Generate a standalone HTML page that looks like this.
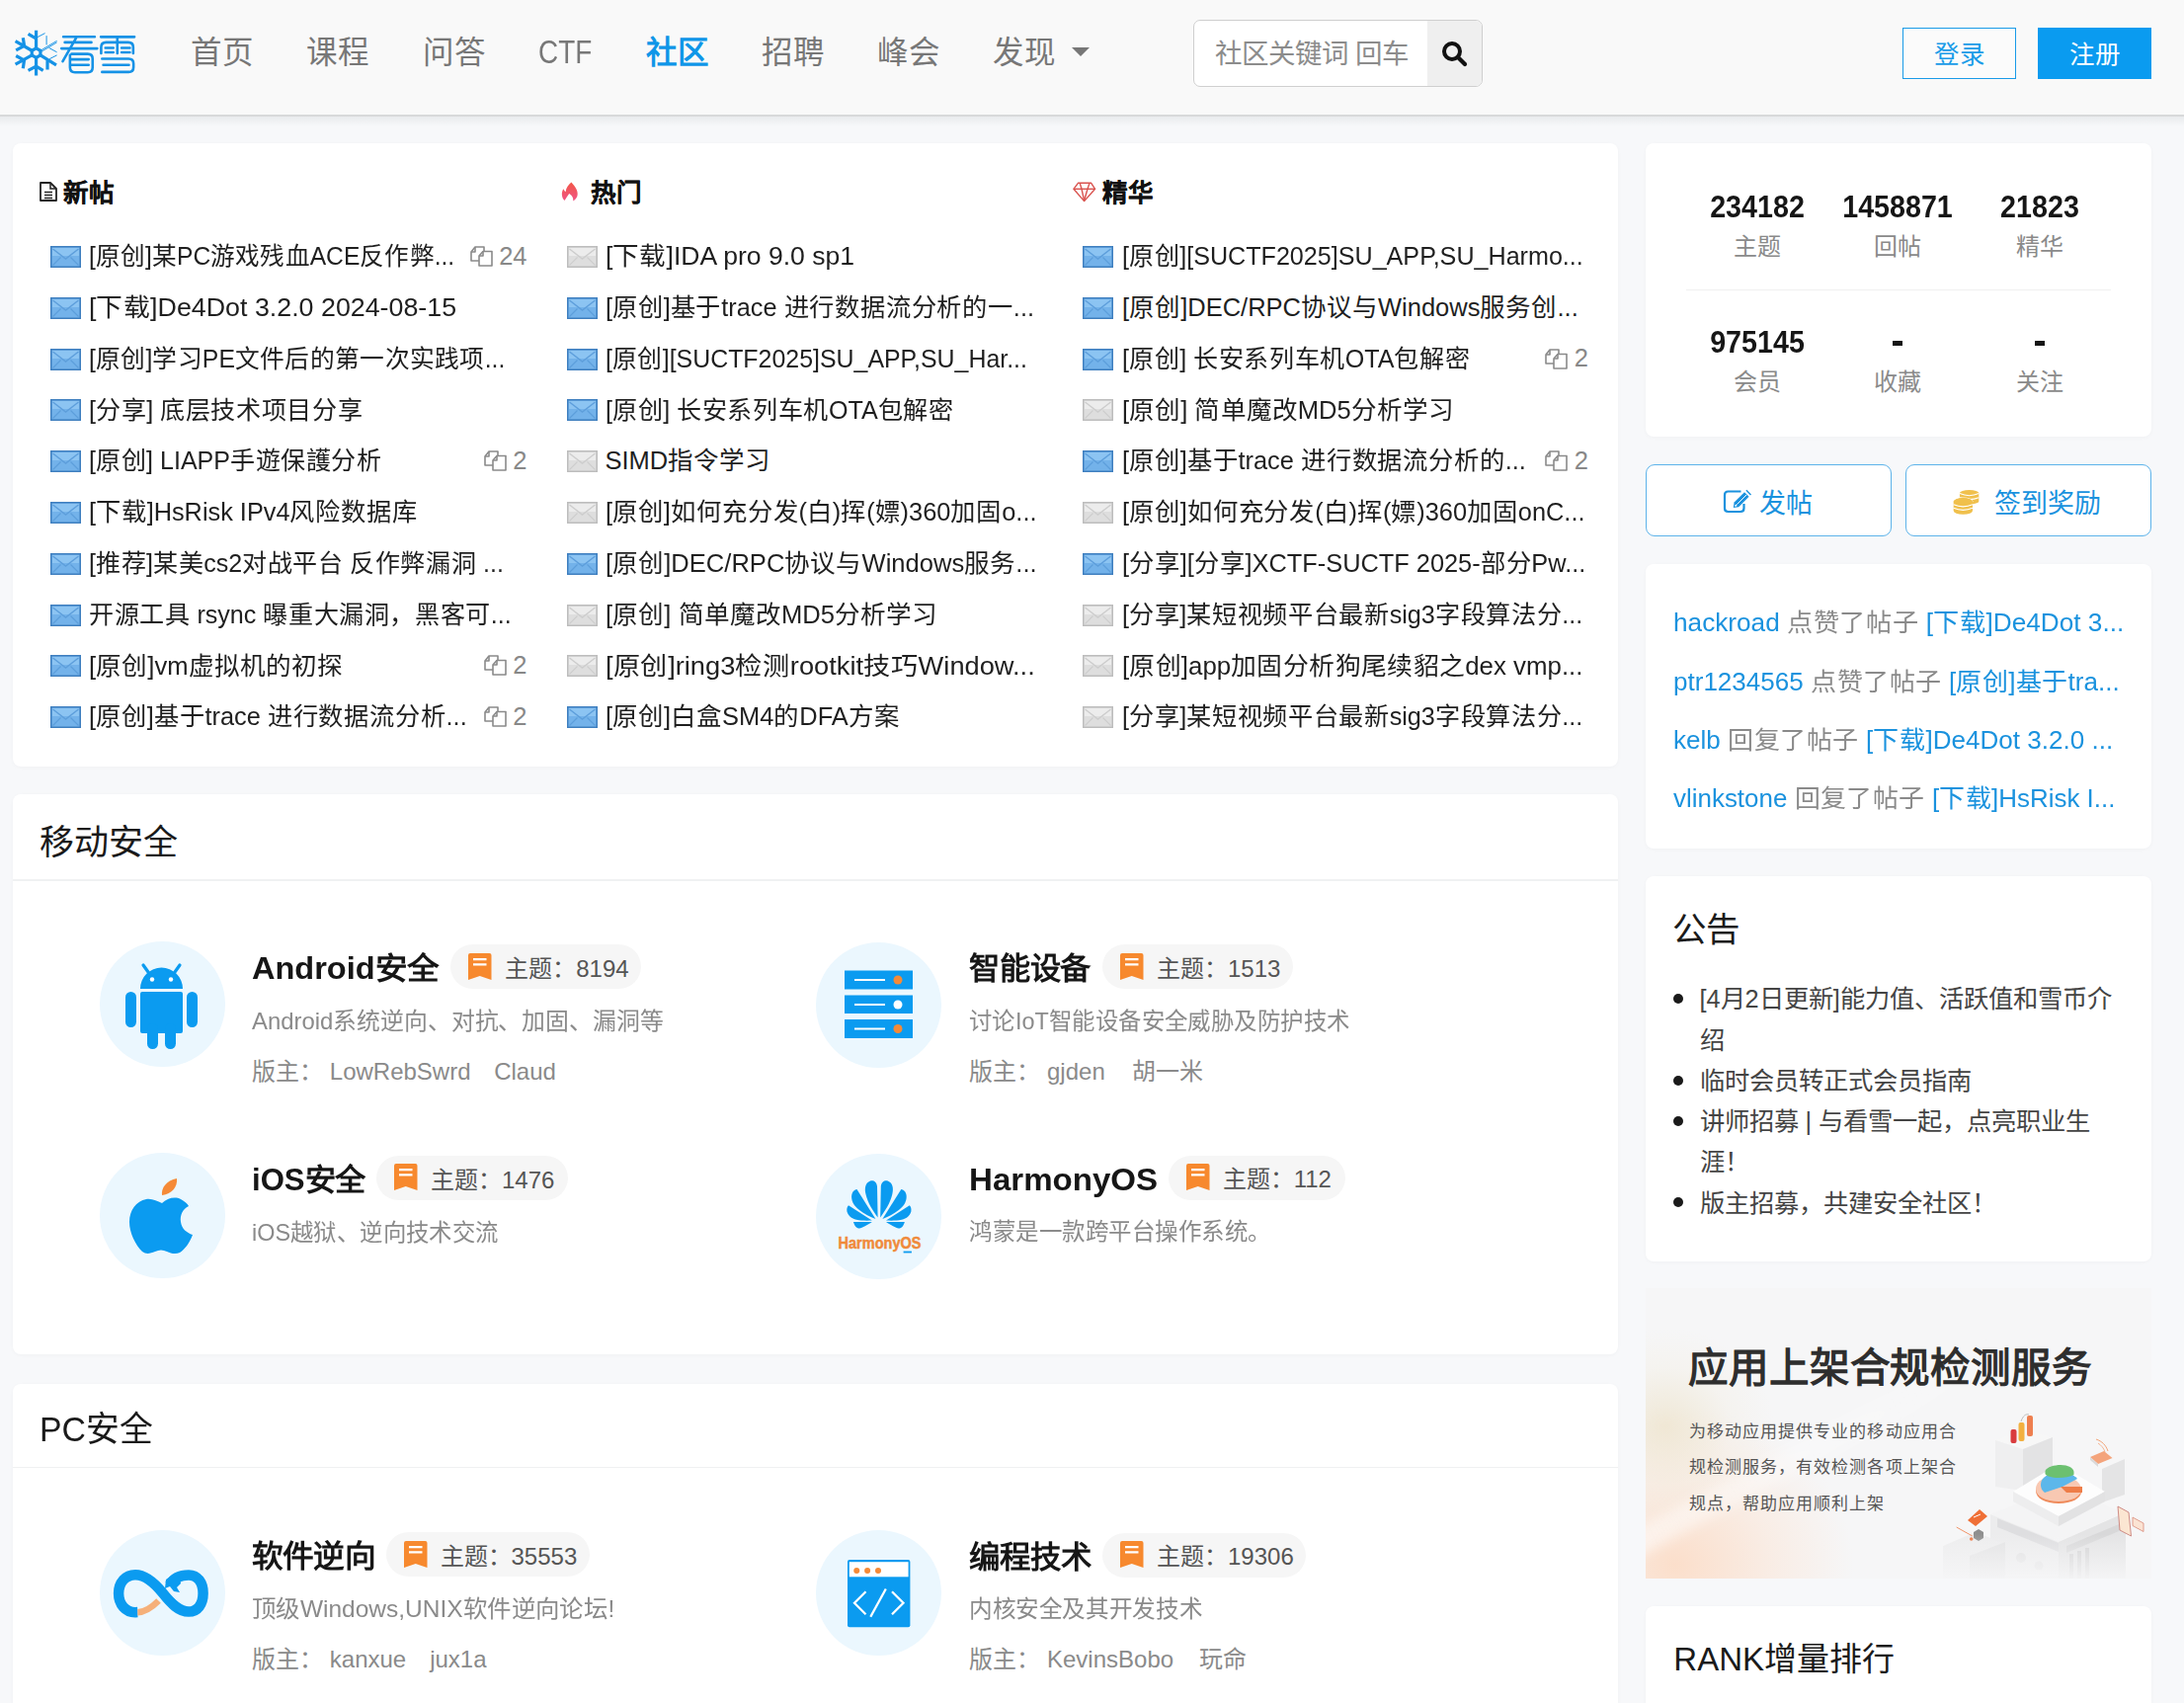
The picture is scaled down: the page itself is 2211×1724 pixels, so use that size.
<!DOCTYPE html>
<html lang="zh-CN"><head><meta charset="utf-8"><title>看雪</title>
<style>
html,body{margin:0;padding:0;}
body{width:2211px;height:1724px;overflow:hidden;position:relative;background:#f7f8fa;font-family:"Liberation Sans",sans-serif;}
.a{position:absolute;white-space:nowrap;}
.card{position:absolute;background:#fff;border-radius:8px;box-shadow:0 1px 4px rgba(0,0,0,0.03);}
svg{position:absolute;overflow:visible;}
</style></head><body>

<div class="a" style="left:0px;top:0px;width:2211px;height:116px;background:#f9f9f9;"></div>
<div class="a" style="left:0px;top:116px;width:2211px;height:2px;background:#d8d9da;"></div>
<div class="a" style="left:0px;top:118px;width:2211px;height:10px;background:linear-gradient(#e9ebed,rgba(245,247,249,0));"></div>
<svg style="left:10px;top:25px" width="135" height="60" viewBox="0 0 2184 971"><g stroke="#1592e6" stroke-linecap="butt" fill="none" stroke-width="52"><polygon points="430,385 500,425 500,500 430,540 360,500 360,425"/><path d="M430 385 V95 M300 150 L425 225 M430 540 V835 M300 750 L430 680 L545 750"/><path d="M360 425 L90 270 M215 215 L235 345 M100 420 L235 345"/><path d="M360 500 L90 650 M100 510 L230 580 M215 715 L235 580"/><path d="M500 500 L760 660 M615 735 L615 590"/></g><g stroke="#1592e6" fill="none" stroke-width="16"><path d="M430 215 L575 140 M650 560 L770 500 M500 425 L770 265 M510 445 L770 290 M600 180 V330 M640 380 L770 450"/></g><g stroke="#1592e6" fill="none" stroke-width="42" stroke-linecap="round" stroke-linejoin="round"><path d="M875 197 H1390 M900 290 H1335 M845 390 H1430 M1085 215 L865 600"/><path d="M985 500 V700 Q985 780 1065 780 H1275 Q1355 780 1355 700 V560 Q1355 480 1275 480 H1010"/><path d="M1005 568 H1290 M1005 660 H1290"/><path d="M1490 200 H2040 M1760 205 V470 M1495 470 V370 Q1495 290 1575 290 H1940 Q2020 290 2020 370 V470"/><path d="M1565 380 H1695 M1565 452 H1695 M1830 380 H1965 M1830 452 H1965"/><path d="M1510 558 H1945 Q2025 558 2025 640 V695 Q2025 775 1945 775 H1510 M1530 660 H1950"/></g></svg>
<div class="a" style="left:193.4px;top:38.1px;font-size:31.5px;line-height:31.5px;color:#777;">首页</div>
<div class="a" style="left:310.4px;top:38.1px;font-size:31.5px;line-height:31.5px;color:#777;">课程</div>
<div class="a" style="left:428.2px;top:38.1px;font-size:31.5px;line-height:31.5px;color:#777;">问答</div>
<div class="a" style="left:544.6px;top:35.3px;font-size:34px;line-height:34px;color:#777;transform-origin:0 0;transform:scaleX(0.82);">CTF</div>
<div class="a" style="left:654.1px;top:38.1px;font-size:31.5px;line-height:31.5px;color:#0f96e8;font-weight:bold;">社区</div>
<div class="a" style="left:770.9px;top:38.1px;font-size:31.5px;line-height:31.5px;color:#777;">招聘</div>
<div class="a" style="left:888.4px;top:38.1px;font-size:31.5px;line-height:31.5px;color:#777;">峰会</div>
<div class="a" style="left:1005.0px;top:38.1px;font-size:31.5px;line-height:31.5px;color:#777;">发现</div>
<svg style="left:1085px;top:48px" width="18" height="10"><polygon points="0,0 18,0 9,9" fill="#777"/></svg>
<div class="a" style="left:1208px;top:20px;width:291px;height:66px;border:1px solid #cfcfcf;border-radius:7px;background:#fff;overflow:hidden;"></div>
<div class="a" style="left:1445px;top:21px;width:55px;height:66px;background:#efefef;border-radius:0 6px 6px 0;"></div>
<div class="a" style="left:1229.5px;top:40.7px;font-size:27.5px;line-height:27.5px;color:#8c8c8c;">社区关键词 回车</div>
<svg style="left:1459px;top:41px" width="27" height="27" viewBox="0 0 27 27">
<circle cx="11" cy="11" r="8" stroke="#111" stroke-width="4" fill="none"/>
<line x1="17" y1="17" x2="24" y2="24" stroke="#111" stroke-width="4.2" stroke-linecap="round"/></svg>
<div class="a" style="left:1926px;top:28px;width:113px;height:49.5px;border:1.2px solid #1a9be8;background:#fbfbfb;"></div>
<div class="a" style="left:1958.0px;top:43.2px;font-size:25.5px;line-height:25.5px;color:#1a9be8;">登录</div>
<div class="a" style="left:2063px;top:28px;width:115px;height:51.5px;background:#0a9bf0;"></div>
<div class="a" style="left:2094.5px;top:43.2px;font-size:25.5px;line-height:25.5px;color:#fff;">注册</div>
<div class="card" style="left:13px;top:145px;width:1625px;height:631px;"></div>
<svg style="left:40px;top:184px" width="18" height="20" viewBox="0 0 18 20"><path d="M1 1 L11 1 L17 7 L17 19 L1 19 Z" stroke="#222" stroke-width="1.8" fill="#fff" stroke-linejoin="round"/><path d="M11 1 L11 7 L17 7" stroke="#222" stroke-width="1.5" fill="none"/><path d="M5 10.5 H13 M5 13.5 H13 M5 16.5 H13" stroke="#222" stroke-width="1.6"/></svg>
<div class="a" style="left:64.1px;top:183.2px;font-size:25.5px;line-height:25.5px;color:#111;font-weight:bold;-webkit-text-stroke:0.2px #111;">新帖</div>
<svg style="left:568px;top:184px" width="18" height="22" viewBox="0 0 18 22"><defs><linearGradient id="flg" x1="0" y1="0" x2="0" y2="1"><stop offset="0" stop-color="#f25646"/><stop offset="1" stop-color="#f05588"/></linearGradient></defs><path d="M10.4 0.6 C13 3.5 16.7 7.5 16.7 12.5 C16.7 15.5 14.8 18 12.2 19.5 C12.8 16.5 11 13.5 8.2 12 C6.8 14 5.2 16.5 3.6 19 C1.8 17.5 0.85 15 0.85 12.5 C0.85 10.5 1.5 8.5 2.4 7.2 C3 8.5 3.8 9.8 4.6 10.2 C5 6 7.5 3 10.4 0.6 Z" fill="url(#flg)"/></svg>
<div class="a" style="left:598.0px;top:183.2px;font-size:25.5px;line-height:25.5px;color:#111;font-weight:bold;-webkit-text-stroke:0.2px #111;">热门</div>
<svg style="left:1086px;top:184px" width="24" height="21" viewBox="0 0 24 21"><g stroke="#d9534f" stroke-width="1.4" fill="none" stroke-linejoin="round"><path d="M5.4 1.3 H18.7 L22.6 7.3 L11.6 19.6 L0.9 7.3 Z"/><path d="M0.9 7.3 H22.6"/><path d="M7.3 1.6 L9 7.3 L11.6 19"/><path d="M16.9 1.6 L15 7.3 L11.6 19"/></g></svg>
<div class="a" style="left:1116.0px;top:183.2px;font-size:25.5px;line-height:25.5px;color:#111;font-weight:bold;-webkit-text-stroke:0.2px #111;">精华</div>
<svg style="left:51px;top:249px" width="31" height="22" viewBox="0 0 31 22"><rect x="0.75" y="0.75" width="29.5" height="20.5" fill="#73b2ea" stroke="#3f7fbf" stroke-width="1.5"/><rect x="2" y="2" width="27" height="8" fill="#8cc4f2"/><path d="M2.5 3 L15.5 13 L28.5 3" stroke="#5d9edb" stroke-width="1.4" fill="none"/><path d="M2.5 19.5 L10.5 11.5 M28.5 19.5 L20.5 11.5" stroke="#5d9edb" stroke-width="1.1" fill="none"/></svg>
<div class="a" style="left:89.8px;top:247.2px;font-size:25.5px;line-height:25.5px;color:#1f1f1f;transform-origin:0 0;transform:scaleX(0.9658);">[原创]某PC游戏残血ACE反作弊...</div>
<div class="a" style="right:1677.5px;top:246.5px;font-size:25.5px;line-height:25.5px;color:#888">24</div>
<svg style="left:476px;top:247px" width="23" height="23" viewBox="0 0 23 23"><g stroke="#8a8a8a" stroke-width="1.6" fill="#fff" stroke-linejoin="round"><path d="M1 8 L5 3 L14 3 L14 17 L1 17 Z"/><path d="M1 8 L5 8 L5 3" fill="none"/><path d="M9 12 L13 7.5 L22 7.5 L22 22 L9 22 Z"/><path d="M9 12 L13 12 L13 7.5" fill="none"/></g></svg>
<svg style="left:51px;top:301px" width="31" height="22" viewBox="0 0 31 22"><rect x="0.75" y="0.75" width="29.5" height="20.5" fill="#73b2ea" stroke="#3f7fbf" stroke-width="1.5"/><rect x="2" y="2" width="27" height="8" fill="#8cc4f2"/><path d="M2.5 3 L15.5 13 L28.5 3" stroke="#5d9edb" stroke-width="1.4" fill="none"/><path d="M2.5 19.5 L10.5 11.5 M28.5 19.5 L20.5 11.5" stroke="#5d9edb" stroke-width="1.1" fill="none"/></svg>
<div class="a" style="left:89.8px;top:299.0px;font-size:25.5px;line-height:25.5px;color:#1f1f1f;transform-origin:0 0;transform:scaleX(1.0513);">[下载]De4Dot 3.2.0 2024-08-15</div>
<svg style="left:51px;top:353px" width="31" height="22" viewBox="0 0 31 22"><rect x="0.75" y="0.75" width="29.5" height="20.5" fill="#73b2ea" stroke="#3f7fbf" stroke-width="1.5"/><rect x="2" y="2" width="27" height="8" fill="#8cc4f2"/><path d="M2.5 3 L15.5 13 L28.5 3" stroke="#5d9edb" stroke-width="1.4" fill="none"/><path d="M2.5 19.5 L10.5 11.5 M28.5 19.5 L20.5 11.5" stroke="#5d9edb" stroke-width="1.1" fill="none"/></svg>
<div class="a" style="left:89.8px;top:350.8px;font-size:25.5px;line-height:25.5px;color:#1f1f1f;transform-origin:0 0;transform:scaleX(0.9721);">[原创]学习PE文件后的第一次实践项...</div>
<svg style="left:51px;top:404px" width="31" height="22" viewBox="0 0 31 22"><rect x="0.75" y="0.75" width="29.5" height="20.5" fill="#73b2ea" stroke="#3f7fbf" stroke-width="1.5"/><rect x="2" y="2" width="27" height="8" fill="#8cc4f2"/><path d="M2.5 3 L15.5 13 L28.5 3" stroke="#5d9edb" stroke-width="1.4" fill="none"/><path d="M2.5 19.5 L10.5 11.5 M28.5 19.5 L20.5 11.5" stroke="#5d9edb" stroke-width="1.1" fill="none"/></svg>
<div class="a" style="left:89.8px;top:402.6px;font-size:25.5px;line-height:25.5px;color:#1f1f1f;transform-origin:0 0;transform:scaleX(0.9856);">[分享] 底层技术项目分享</div>
<svg style="left:51px;top:456px" width="31" height="22" viewBox="0 0 31 22"><rect x="0.75" y="0.75" width="29.5" height="20.5" fill="#73b2ea" stroke="#3f7fbf" stroke-width="1.5"/><rect x="2" y="2" width="27" height="8" fill="#8cc4f2"/><path d="M2.5 3 L15.5 13 L28.5 3" stroke="#5d9edb" stroke-width="1.4" fill="none"/><path d="M2.5 19.5 L10.5 11.5 M28.5 19.5 L20.5 11.5" stroke="#5d9edb" stroke-width="1.1" fill="none"/></svg>
<div class="a" style="left:89.8px;top:454.4px;font-size:25.5px;line-height:25.5px;color:#1f1f1f;transform-origin:0 0;transform:scaleX(0.9826);">[原创] LIAPP手遊保護分析</div>
<div class="a" style="right:1677.5px;top:453.7px;font-size:25.5px;line-height:25.5px;color:#888">2</div>
<svg style="left:490px;top:454px" width="23" height="23" viewBox="0 0 23 23"><g stroke="#8a8a8a" stroke-width="1.6" fill="#fff" stroke-linejoin="round"><path d="M1 8 L5 3 L14 3 L14 17 L1 17 Z"/><path d="M1 8 L5 8 L5 3" fill="none"/><path d="M9 12 L13 7.5 L22 7.5 L22 22 L9 22 Z"/><path d="M9 12 L13 12 L13 7.5" fill="none"/></g></svg>
<svg style="left:51px;top:508px" width="31" height="22" viewBox="0 0 31 22"><rect x="0.75" y="0.75" width="29.5" height="20.5" fill="#73b2ea" stroke="#3f7fbf" stroke-width="1.5"/><rect x="2" y="2" width="27" height="8" fill="#8cc4f2"/><path d="M2.5 3 L15.5 13 L28.5 3" stroke="#5d9edb" stroke-width="1.4" fill="none"/><path d="M2.5 19.5 L10.5 11.5 M28.5 19.5 L20.5 11.5" stroke="#5d9edb" stroke-width="1.1" fill="none"/></svg>
<div class="a" style="left:89.8px;top:506.2px;font-size:25.5px;line-height:25.5px;color:#1f1f1f;transform-origin:0 0;transform:scaleX(0.9925);">[下载]HsRisk IPv4风险数据库</div>
<svg style="left:51px;top:560px" width="31" height="22" viewBox="0 0 31 22"><rect x="0.75" y="0.75" width="29.5" height="20.5" fill="#73b2ea" stroke="#3f7fbf" stroke-width="1.5"/><rect x="2" y="2" width="27" height="8" fill="#8cc4f2"/><path d="M2.5 3 L15.5 13 L28.5 3" stroke="#5d9edb" stroke-width="1.4" fill="none"/><path d="M2.5 19.5 L10.5 11.5 M28.5 19.5 L20.5 11.5" stroke="#5d9edb" stroke-width="1.1" fill="none"/></svg>
<div class="a" style="left:89.8px;top:558.0px;font-size:25.5px;line-height:25.5px;color:#1f1f1f;transform-origin:0 0;transform:scaleX(0.9828);">[推荐]某美cs2对战平台 反作弊漏洞 ...</div>
<svg style="left:51px;top:612px" width="31" height="22" viewBox="0 0 31 22"><rect x="0.75" y="0.75" width="29.5" height="20.5" fill="#73b2ea" stroke="#3f7fbf" stroke-width="1.5"/><rect x="2" y="2" width="27" height="8" fill="#8cc4f2"/><path d="M2.5 3 L15.5 13 L28.5 3" stroke="#5d9edb" stroke-width="1.4" fill="none"/><path d="M2.5 19.5 L10.5 11.5 M28.5 19.5 L20.5 11.5" stroke="#5d9edb" stroke-width="1.1" fill="none"/></svg>
<div class="a" style="left:89.8px;top:609.8px;font-size:25.5px;line-height:25.5px;color:#1f1f1f;transform-origin:0 0;transform:scaleX(0.9847);">开源工具 rsync 曝重大漏洞，黑客可...</div>
<svg style="left:51px;top:663px" width="31" height="22" viewBox="0 0 31 22"><rect x="0.75" y="0.75" width="29.5" height="20.5" fill="#73b2ea" stroke="#3f7fbf" stroke-width="1.5"/><rect x="2" y="2" width="27" height="8" fill="#8cc4f2"/><path d="M2.5 3 L15.5 13 L28.5 3" stroke="#5d9edb" stroke-width="1.4" fill="none"/><path d="M2.5 19.5 L10.5 11.5 M28.5 19.5 L20.5 11.5" stroke="#5d9edb" stroke-width="1.1" fill="none"/></svg>
<div class="a" style="left:89.8px;top:661.6px;font-size:25.5px;line-height:25.5px;color:#1f1f1f;transform-origin:0 0;transform:scaleX(1.0036);">[原创]vm虚拟机的初探</div>
<div class="a" style="right:1677.5px;top:660.9px;font-size:25.5px;line-height:25.5px;color:#888">2</div>
<svg style="left:490px;top:661px" width="23" height="23" viewBox="0 0 23 23"><g stroke="#8a8a8a" stroke-width="1.6" fill="#fff" stroke-linejoin="round"><path d="M1 8 L5 3 L14 3 L14 17 L1 17 Z"/><path d="M1 8 L5 8 L5 3" fill="none"/><path d="M9 12 L13 7.5 L22 7.5 L22 22 L9 22 Z"/><path d="M9 12 L13 12 L13 7.5" fill="none"/></g></svg>
<svg style="left:51px;top:715px" width="31" height="22" viewBox="0 0 31 22"><rect x="0.75" y="0.75" width="29.5" height="20.5" fill="#73b2ea" stroke="#3f7fbf" stroke-width="1.5"/><rect x="2" y="2" width="27" height="8" fill="#8cc4f2"/><path d="M2.5 3 L15.5 13 L28.5 3" stroke="#5d9edb" stroke-width="1.4" fill="none"/><path d="M2.5 19.5 L10.5 11.5 M28.5 19.5 L20.5 11.5" stroke="#5d9edb" stroke-width="1.1" fill="none"/></svg>
<div class="a" style="left:89.8px;top:713.4px;font-size:25.5px;line-height:25.5px;color:#1f1f1f;transform-origin:0 0;transform:scaleX(0.9935);">[原创]基于trace 进行数据流分析...</div>
<div class="a" style="right:1677.5px;top:712.7px;font-size:25.5px;line-height:25.5px;color:#888">2</div>
<svg style="left:490px;top:713px" width="23" height="23" viewBox="0 0 23 23"><g stroke="#8a8a8a" stroke-width="1.6" fill="#fff" stroke-linejoin="round"><path d="M1 8 L5 3 L14 3 L14 17 L1 17 Z"/><path d="M1 8 L5 8 L5 3" fill="none"/><path d="M9 12 L13 7.5 L22 7.5 L22 22 L9 22 Z"/><path d="M9 12 L13 12 L13 7.5" fill="none"/></g></svg>
<svg style="left:574px;top:249px" width="31" height="22" viewBox="0 0 31 22"><rect x="0.75" y="0.75" width="29.5" height="20.5" fill="#dedede" stroke="#bdbdbd" stroke-width="1.5"/><rect x="2" y="2" width="27" height="8" fill="#ececec"/><path d="M2.5 3 L15.5 13 L28.5 3" stroke="#cdcdcd" stroke-width="1.4" fill="none"/><path d="M2.5 19.5 L10.5 11.5 M28.5 19.5 L20.5 11.5" stroke="#cdcdcd" stroke-width="1.1" fill="none"/></svg>
<div class="a" style="left:612.5px;top:247.2px;font-size:25.5px;line-height:25.5px;color:#1f1f1f;transform-origin:0 0;transform:scaleX(1.0418);">[下载]IDA pro 9.0 sp1</div>
<svg style="left:574px;top:301px" width="31" height="22" viewBox="0 0 31 22"><rect x="0.75" y="0.75" width="29.5" height="20.5" fill="#73b2ea" stroke="#3f7fbf" stroke-width="1.5"/><rect x="2" y="2" width="27" height="8" fill="#8cc4f2"/><path d="M2.5 3 L15.5 13 L28.5 3" stroke="#5d9edb" stroke-width="1.4" fill="none"/><path d="M2.5 19.5 L10.5 11.5 M28.5 19.5 L20.5 11.5" stroke="#5d9edb" stroke-width="1.1" fill="none"/></svg>
<div class="a" style="left:612.5px;top:299.0px;font-size:25.5px;line-height:25.5px;color:#1f1f1f;transform-origin:0 0;transform:scaleX(0.9926);">[原创]基于trace 进行数据流分析的一...</div>
<svg style="left:574px;top:353px" width="31" height="22" viewBox="0 0 31 22"><rect x="0.75" y="0.75" width="29.5" height="20.5" fill="#73b2ea" stroke="#3f7fbf" stroke-width="1.5"/><rect x="2" y="2" width="27" height="8" fill="#8cc4f2"/><path d="M2.5 3 L15.5 13 L28.5 3" stroke="#5d9edb" stroke-width="1.4" fill="none"/><path d="M2.5 19.5 L10.5 11.5 M28.5 19.5 L20.5 11.5" stroke="#5d9edb" stroke-width="1.1" fill="none"/></svg>
<div class="a" style="left:612.5px;top:350.8px;font-size:25.5px;line-height:25.5px;color:#1f1f1f;transform-origin:0 0;transform:scaleX(0.9769);">[原创][SUCTF2025]SU_APP,SU_Har...</div>
<svg style="left:574px;top:404px" width="31" height="22" viewBox="0 0 31 22"><rect x="0.75" y="0.75" width="29.5" height="20.5" fill="#73b2ea" stroke="#3f7fbf" stroke-width="1.5"/><rect x="2" y="2" width="27" height="8" fill="#8cc4f2"/><path d="M2.5 3 L15.5 13 L28.5 3" stroke="#5d9edb" stroke-width="1.4" fill="none"/><path d="M2.5 19.5 L10.5 11.5 M28.5 19.5 L20.5 11.5" stroke="#5d9edb" stroke-width="1.1" fill="none"/></svg>
<div class="a" style="left:612.5px;top:402.6px;font-size:25.5px;line-height:25.5px;color:#1f1f1f;transform-origin:0 0;transform:scaleX(0.9859);">[原创] 长安系列车机OTA包解密</div>
<svg style="left:574px;top:456px" width="31" height="22" viewBox="0 0 31 22"><rect x="0.75" y="0.75" width="29.5" height="20.5" fill="#dedede" stroke="#bdbdbd" stroke-width="1.5"/><rect x="2" y="2" width="27" height="8" fill="#ececec"/><path d="M2.5 3 L15.5 13 L28.5 3" stroke="#cdcdcd" stroke-width="1.4" fill="none"/><path d="M2.5 19.5 L10.5 11.5 M28.5 19.5 L20.5 11.5" stroke="#cdcdcd" stroke-width="1.1" fill="none"/></svg>
<div class="a" style="left:612.5px;top:454.4px;font-size:25.5px;line-height:25.5px;color:#1f1f1f;transform-origin:0 0;transform:scaleX(1.0000);">SIMD指令学习</div>
<svg style="left:574px;top:508px" width="31" height="22" viewBox="0 0 31 22"><rect x="0.75" y="0.75" width="29.5" height="20.5" fill="#dedede" stroke="#bdbdbd" stroke-width="1.5"/><rect x="2" y="2" width="27" height="8" fill="#ececec"/><path d="M2.5 3 L15.5 13 L28.5 3" stroke="#cdcdcd" stroke-width="1.4" fill="none"/><path d="M2.5 19.5 L10.5 11.5 M28.5 19.5 L20.5 11.5" stroke="#cdcdcd" stroke-width="1.1" fill="none"/></svg>
<div class="a" style="left:612.5px;top:506.2px;font-size:25.5px;line-height:25.5px;color:#1f1f1f;transform-origin:0 0;transform:scaleX(0.9963);">[原创]如何充分发(白)挥(嫖)360加固o...</div>
<svg style="left:574px;top:560px" width="31" height="22" viewBox="0 0 31 22"><rect x="0.75" y="0.75" width="29.5" height="20.5" fill="#73b2ea" stroke="#3f7fbf" stroke-width="1.5"/><rect x="2" y="2" width="27" height="8" fill="#8cc4f2"/><path d="M2.5 3 L15.5 13 L28.5 3" stroke="#5d9edb" stroke-width="1.4" fill="none"/><path d="M2.5 19.5 L10.5 11.5 M28.5 19.5 L20.5 11.5" stroke="#5d9edb" stroke-width="1.1" fill="none"/></svg>
<div class="a" style="left:612.5px;top:558.0px;font-size:25.5px;line-height:25.5px;color:#1f1f1f;transform-origin:0 0;transform:scaleX(1.0023);">[原创]DEC/RPC协议与Windows服务...</div>
<svg style="left:574px;top:612px" width="31" height="22" viewBox="0 0 31 22"><rect x="0.75" y="0.75" width="29.5" height="20.5" fill="#dedede" stroke="#bdbdbd" stroke-width="1.5"/><rect x="2" y="2" width="27" height="8" fill="#ececec"/><path d="M2.5 3 L15.5 13 L28.5 3" stroke="#cdcdcd" stroke-width="1.4" fill="none"/><path d="M2.5 19.5 L10.5 11.5 M28.5 19.5 L20.5 11.5" stroke="#cdcdcd" stroke-width="1.1" fill="none"/></svg>
<div class="a" style="left:612.5px;top:609.8px;font-size:25.5px;line-height:25.5px;color:#1f1f1f;transform-origin:0 0;transform:scaleX(1.0042);">[原创] 简单魔改MD5分析学习</div>
<svg style="left:574px;top:663px" width="31" height="22" viewBox="0 0 31 22"><rect x="0.75" y="0.75" width="29.5" height="20.5" fill="#dedede" stroke="#bdbdbd" stroke-width="1.5"/><rect x="2" y="2" width="27" height="8" fill="#ececec"/><path d="M2.5 3 L15.5 13 L28.5 3" stroke="#cdcdcd" stroke-width="1.4" fill="none"/><path d="M2.5 19.5 L10.5 11.5 M28.5 19.5 L20.5 11.5" stroke="#cdcdcd" stroke-width="1.1" fill="none"/></svg>
<div class="a" style="left:612.5px;top:661.6px;font-size:25.5px;line-height:25.5px;color:#1f1f1f;transform-origin:0 0;transform:scaleX(1.0685);">[原创]ring3检测rootkit技巧Window...</div>
<svg style="left:574px;top:715px" width="31" height="22" viewBox="0 0 31 22"><rect x="0.75" y="0.75" width="29.5" height="20.5" fill="#73b2ea" stroke="#3f7fbf" stroke-width="1.5"/><rect x="2" y="2" width="27" height="8" fill="#8cc4f2"/><path d="M2.5 3 L15.5 13 L28.5 3" stroke="#5d9edb" stroke-width="1.4" fill="none"/><path d="M2.5 19.5 L10.5 11.5 M28.5 19.5 L20.5 11.5" stroke="#5d9edb" stroke-width="1.1" fill="none"/></svg>
<div class="a" style="left:612.5px;top:713.4px;font-size:25.5px;line-height:25.5px;color:#1f1f1f;transform-origin:0 0;transform:scaleX(0.9983);">[原创]白盒SM4的DFA方案</div>
<svg style="left:1096px;top:249px" width="31" height="22" viewBox="0 0 31 22"><rect x="0.75" y="0.75" width="29.5" height="20.5" fill="#73b2ea" stroke="#3f7fbf" stroke-width="1.5"/><rect x="2" y="2" width="27" height="8" fill="#8cc4f2"/><path d="M2.5 3 L15.5 13 L28.5 3" stroke="#5d9edb" stroke-width="1.4" fill="none"/><path d="M2.5 19.5 L10.5 11.5 M28.5 19.5 L20.5 11.5" stroke="#5d9edb" stroke-width="1.1" fill="none"/></svg>
<div class="a" style="left:1136.1px;top:247.2px;font-size:25.5px;line-height:25.5px;color:#1f1f1f;transform-origin:0 0;transform:scaleX(0.9851);">[原创][SUCTF2025]SU_APP,SU_Harmo...</div>
<svg style="left:1096px;top:301px" width="31" height="22" viewBox="0 0 31 22"><rect x="0.75" y="0.75" width="29.5" height="20.5" fill="#73b2ea" stroke="#3f7fbf" stroke-width="1.5"/><rect x="2" y="2" width="27" height="8" fill="#8cc4f2"/><path d="M2.5 3 L15.5 13 L28.5 3" stroke="#5d9edb" stroke-width="1.4" fill="none"/><path d="M2.5 19.5 L10.5 11.5 M28.5 19.5 L20.5 11.5" stroke="#5d9edb" stroke-width="1.1" fill="none"/></svg>
<div class="a" style="left:1136.1px;top:299.0px;font-size:25.5px;line-height:25.5px;color:#1f1f1f;transform-origin:0 0;transform:scaleX(1.0000);">[原创]DEC/RPC协议与Windows服务创...</div>
<svg style="left:1096px;top:353px" width="31" height="22" viewBox="0 0 31 22"><rect x="0.75" y="0.75" width="29.5" height="20.5" fill="#73b2ea" stroke="#3f7fbf" stroke-width="1.5"/><rect x="2" y="2" width="27" height="8" fill="#8cc4f2"/><path d="M2.5 3 L15.5 13 L28.5 3" stroke="#5d9edb" stroke-width="1.4" fill="none"/><path d="M2.5 19.5 L10.5 11.5 M28.5 19.5 L20.5 11.5" stroke="#5d9edb" stroke-width="1.1" fill="none"/></svg>
<div class="a" style="left:1136.1px;top:350.8px;font-size:25.5px;line-height:25.5px;color:#1f1f1f;transform-origin:0 0;transform:scaleX(0.9845);">[原创] 长安系列车机OTA包解密</div>
<div class="a" style="right:603.0px;top:350.1px;font-size:25.5px;line-height:25.5px;color:#888">2</div>
<svg style="left:1564px;top:351px" width="23" height="23" viewBox="0 0 23 23"><g stroke="#8a8a8a" stroke-width="1.6" fill="#fff" stroke-linejoin="round"><path d="M1 8 L5 3 L14 3 L14 17 L1 17 Z"/><path d="M1 8 L5 8 L5 3" fill="none"/><path d="M9 12 L13 7.5 L22 7.5 L22 22 L9 22 Z"/><path d="M9 12 L13 12 L13 7.5" fill="none"/></g></svg>
<svg style="left:1096px;top:404px" width="31" height="22" viewBox="0 0 31 22"><rect x="0.75" y="0.75" width="29.5" height="20.5" fill="#dedede" stroke="#bdbdbd" stroke-width="1.5"/><rect x="2" y="2" width="27" height="8" fill="#ececec"/><path d="M2.5 3 L15.5 13 L28.5 3" stroke="#cdcdcd" stroke-width="1.4" fill="none"/><path d="M2.5 19.5 L10.5 11.5 M28.5 19.5 L20.5 11.5" stroke="#cdcdcd" stroke-width="1.1" fill="none"/></svg>
<div class="a" style="left:1136.1px;top:402.6px;font-size:25.5px;line-height:25.5px;color:#1f1f1f;transform-origin:0 0;transform:scaleX(1.0030);">[原创] 简单魔改MD5分析学习</div>
<svg style="left:1096px;top:456px" width="31" height="22" viewBox="0 0 31 22"><rect x="0.75" y="0.75" width="29.5" height="20.5" fill="#73b2ea" stroke="#3f7fbf" stroke-width="1.5"/><rect x="2" y="2" width="27" height="8" fill="#8cc4f2"/><path d="M2.5 3 L15.5 13 L28.5 3" stroke="#5d9edb" stroke-width="1.4" fill="none"/><path d="M2.5 19.5 L10.5 11.5 M28.5 19.5 L20.5 11.5" stroke="#5d9edb" stroke-width="1.1" fill="none"/></svg>
<div class="a" style="left:1136.1px;top:454.4px;font-size:25.5px;line-height:25.5px;color:#1f1f1f;transform-origin:0 0;transform:scaleX(0.9941);">[原创]基于trace 进行数据流分析的...</div>
<div class="a" style="right:603.0px;top:453.7px;font-size:25.5px;line-height:25.5px;color:#888">2</div>
<svg style="left:1564px;top:454px" width="23" height="23" viewBox="0 0 23 23"><g stroke="#8a8a8a" stroke-width="1.6" fill="#fff" stroke-linejoin="round"><path d="M1 8 L5 3 L14 3 L14 17 L1 17 Z"/><path d="M1 8 L5 8 L5 3" fill="none"/><path d="M9 12 L13 7.5 L22 7.5 L22 22 L9 22 Z"/><path d="M9 12 L13 12 L13 7.5" fill="none"/></g></svg>
<svg style="left:1096px;top:508px" width="31" height="22" viewBox="0 0 31 22"><rect x="0.75" y="0.75" width="29.5" height="20.5" fill="#dedede" stroke="#bdbdbd" stroke-width="1.5"/><rect x="2" y="2" width="27" height="8" fill="#ececec"/><path d="M2.5 3 L15.5 13 L28.5 3" stroke="#cdcdcd" stroke-width="1.4" fill="none"/><path d="M2.5 19.5 L10.5 11.5 M28.5 19.5 L20.5 11.5" stroke="#cdcdcd" stroke-width="1.1" fill="none"/></svg>
<div class="a" style="left:1136.1px;top:506.2px;font-size:25.5px;line-height:25.5px;color:#1f1f1f;transform-origin:0 0;transform:scaleX(0.9953);">[原创]如何充分发(白)挥(嫖)360加固onC...</div>
<svg style="left:1096px;top:560px" width="31" height="22" viewBox="0 0 31 22"><rect x="0.75" y="0.75" width="29.5" height="20.5" fill="#73b2ea" stroke="#3f7fbf" stroke-width="1.5"/><rect x="2" y="2" width="27" height="8" fill="#8cc4f2"/><path d="M2.5 3 L15.5 13 L28.5 3" stroke="#5d9edb" stroke-width="1.4" fill="none"/><path d="M2.5 19.5 L10.5 11.5 M28.5 19.5 L20.5 11.5" stroke="#5d9edb" stroke-width="1.1" fill="none"/></svg>
<div class="a" style="left:1136.1px;top:558.0px;font-size:25.5px;line-height:25.5px;color:#1f1f1f;transform-origin:0 0;transform:scaleX(0.9944);">[分享][分享]XCTF-SUCTF 2025-部分Pw...</div>
<svg style="left:1096px;top:612px" width="31" height="22" viewBox="0 0 31 22"><rect x="0.75" y="0.75" width="29.5" height="20.5" fill="#dedede" stroke="#bdbdbd" stroke-width="1.5"/><rect x="2" y="2" width="27" height="8" fill="#ececec"/><path d="M2.5 3 L15.5 13 L28.5 3" stroke="#cdcdcd" stroke-width="1.4" fill="none"/><path d="M2.5 19.5 L10.5 11.5 M28.5 19.5 L20.5 11.5" stroke="#cdcdcd" stroke-width="1.1" fill="none"/></svg>
<div class="a" style="left:1136.1px;top:609.8px;font-size:25.5px;line-height:25.5px;color:#1f1f1f;transform-origin:0 0;transform:scaleX(0.9872);">[分享]某短视频平台最新sig3字段算法分...</div>
<svg style="left:1096px;top:663px" width="31" height="22" viewBox="0 0 31 22"><rect x="0.75" y="0.75" width="29.5" height="20.5" fill="#dedede" stroke="#bdbdbd" stroke-width="1.5"/><rect x="2" y="2" width="27" height="8" fill="#ececec"/><path d="M2.5 3 L15.5 13 L28.5 3" stroke="#cdcdcd" stroke-width="1.4" fill="none"/><path d="M2.5 19.5 L10.5 11.5 M28.5 19.5 L20.5 11.5" stroke="#cdcdcd" stroke-width="1.1" fill="none"/></svg>
<div class="a" style="left:1136.1px;top:661.6px;font-size:25.5px;line-height:25.5px;color:#1f1f1f;transform-origin:0 0;transform:scaleX(1.0132);">[原创]app加固分析狗尾续貂之dex vmp...</div>
<svg style="left:1096px;top:715px" width="31" height="22" viewBox="0 0 31 22"><rect x="0.75" y="0.75" width="29.5" height="20.5" fill="#dedede" stroke="#bdbdbd" stroke-width="1.5"/><rect x="2" y="2" width="27" height="8" fill="#ececec"/><path d="M2.5 3 L15.5 13 L28.5 3" stroke="#cdcdcd" stroke-width="1.4" fill="none"/><path d="M2.5 19.5 L10.5 11.5 M28.5 19.5 L20.5 11.5" stroke="#cdcdcd" stroke-width="1.1" fill="none"/></svg>
<div class="a" style="left:1136.1px;top:713.4px;font-size:25.5px;line-height:25.5px;color:#1f1f1f;transform-origin:0 0;transform:scaleX(0.9872);">[分享]某短视频平台最新sig3字段算法分...</div>
<div class="card" style="left:1666px;top:145px;width:512px;height:297px;"></div>
<div class="a" style="left:1678.5px;width:200px;text-align:center;top:193.5px;font-size:31px;line-height:31px;font-weight:bold;color:#161616;transform:scaleX(0.925);">234182</div>
<div class="a" style="left:1678.5px;width:200px;text-align:center;top:238.3px;font-size:24px;line-height:24px;color:#8a8a8a;">主题</div>
<div class="a" style="left:1821px;width:200px;text-align:center;top:193.5px;font-size:31px;line-height:31px;font-weight:bold;color:#161616;transform:scaleX(0.925);">1458871</div>
<div class="a" style="left:1821px;width:200px;text-align:center;top:238.3px;font-size:24px;line-height:24px;color:#8a8a8a;">回帖</div>
<div class="a" style="left:1965px;width:200px;text-align:center;top:193.5px;font-size:31px;line-height:31px;font-weight:bold;color:#161616;transform:scaleX(0.925);">21823</div>
<div class="a" style="left:1965px;width:200px;text-align:center;top:238.3px;font-size:24px;line-height:24px;color:#8a8a8a;">精华</div>
<div class="a" style="left:1678.5px;width:200px;text-align:center;top:330.5px;font-size:31px;line-height:31px;font-weight:bold;color:#161616;transform:scaleX(0.925);">975145</div>
<div class="a" style="left:1678.5px;width:200px;text-align:center;top:375.3px;font-size:24px;line-height:24px;color:#8a8a8a;">会员</div>
<div class="a" style="left:1916px;top:345px;width:10px;height:4.5px;background:#161616;"></div>
<div class="a" style="left:1821px;width:200px;text-align:center;top:375.3px;font-size:24px;line-height:24px;color:#8a8a8a;">收藏</div>
<div class="a" style="left:2060px;top:345px;width:10px;height:4.5px;background:#161616;"></div>
<div class="a" style="left:1965px;width:200px;text-align:center;top:375.3px;font-size:24px;line-height:24px;color:#8a8a8a;">关注</div>
<div class="a" style="left:1707px;top:293px;width:430px;height:1px;background:#f0f0f0;"></div>
<div class="a" style="left:1666px;top:470px;width:247px;height:71px;border:1.5px solid #5db3ea;border-radius:9px;background:#fff;"></div>
<div class="a" style="left:1929px;top:470px;width:247px;height:71px;border:1.5px solid #5db3ea;border-radius:9px;background:#fff;"></div>
<svg style="left:1745px;top:496px" width="28" height="23" viewBox="0 0 28 23"><path d="M17.5 1.5 H4.5 Q1 1.5 1 5 V18.5 Q1 22 4.5 22 H17 Q20.5 22 20.5 18.5 V14" stroke="#1a92de" stroke-width="2.2" fill="none"/><path d="M9.8 18.1 L10.6 12.6 L21 2.2 L25.6 6.8 L15.2 17.2 Z" fill="#1a92de"/><path d="M22.4 0.8 L23.4 -0.2 L28 4.4 L27 5.4 Z" fill="#1a92de"/><path d="M13.4 14.6 L23.2 4.8" stroke="#fff" stroke-width="1"/><path d="M11.5 16.5 L13 15" stroke="#fff" stroke-width="1.6"/></svg>
<div class="a" style="left:1781.1px;top:496.6px;font-size:27px;line-height:27px;color:#1a92de;">发帖</div>
<svg style="left:1975px;top:494px" width="30" height="28" viewBox="0 0 30 28"><g fill="#f0c04c"><ellipse cx="18.6" cy="5" rx="9.7" ry="3"/><rect x="8.9" y="5" width="19.4" height="8.5"/><ellipse cx="18.6" cy="13.5" rx="9.7" ry="3"/></g><g stroke="#fff" stroke-width="1.1" fill="none"><path d="M8.9 5.6 Q18.6 9.8 28.3 5.6"/><path d="M8.9 9.8 Q18.6 13.5 28.3 9.8"/></g><g fill="#f0c04c" stroke="#fff" stroke-width="0.8"><ellipse cx="12.35" cy="13.7" rx="9.65" ry="3.8"/></g><g fill="#f0c04c"><rect x="2.7" y="13.7" width="19.3" height="9.3"/><ellipse cx="12.35" cy="23" rx="9.65" ry="3.8"/><ellipse cx="12.35" cy="13.7" rx="9.65" ry="3.6"/></g><g stroke="#fff" stroke-width="1.2" fill="none"><path d="M2.7 16.8 Q12.35 21 22 16.8"/><path d="M2.7 20.3 Q12.35 24.5 22 20.3"/></g></svg>
<div class="a" style="left:2019.1px;top:496.6px;font-size:27px;line-height:27px;color:#1a92de;">签到奖励</div>
<div class="card" style="left:1666px;top:571px;width:512px;height:288px;"></div>
<div class="a" style="left:1694.1px;top:618.2px;font-size:25.5px;line-height:25.5px;color:#222;transform-origin:0 0;transform:scaleX(1.027);"><span style="color:#1a92de">hackroad</span><span style="color:#8a8a8a"> 点赞了帖子 </span><span style="color:#1a92de">[下载]De4Dot 3...</span></div>
<div class="a" style="left:1694.1px;top:677.6px;font-size:25.5px;line-height:25.5px;color:#222;transform-origin:0 0;transform:scaleX(1.021);"><span style="color:#1a92de">ptr1234565</span><span style="color:#8a8a8a"> 点赞了帖子 </span><span style="color:#1a92de">[原创]基于tra...</span></div>
<div class="a" style="left:1694.1px;top:737.0px;font-size:25.5px;line-height:25.5px;color:#222;transform-origin:0 0;transform:scaleX(1.0217);"><span style="color:#1a92de">kelb</span><span style="color:#8a8a8a"> 回复了帖子 </span><span style="color:#1a92de">[下载]De4Dot 3.2.0 ...</span></div>
<div class="a" style="left:1694.1px;top:796.4px;font-size:25.5px;line-height:25.5px;color:#222;transform-origin:0 0;transform:scaleX(1.017);"><span style="color:#1a92de">vlinkstone</span><span style="color:#8a8a8a"> 回复了帖子 </span><span style="color:#1a92de">[下载]HsRisk I...</span></div>
<div class="card" style="left:1666px;top:887px;width:512px;height:390px;"></div>
<div class="a" style="left:1693.3px;top:924.0px;font-size:34.5px;line-height:34.5px;color:#1a1a1a;">公告</div>
<div class="a" style="left:1694px;top:1006px;width:10px;height:10px;border-radius:5px;background:#1a1a1a"></div>
<div class="a" style="left:1720.5px;top:999.2px;font-size:25.3px;line-height:25.3px;color:#444;">[4月2日更新]能力值、活跃值和雪币介</div>
<div class="a" style="left:1720.5px;top:1040.7px;font-size:25.3px;line-height:25.3px;color:#444;">绍</div>
<div class="a" style="left:1694px;top:1088.8px;width:10px;height:10px;border-radius:5px;background:#1a1a1a"></div>
<div class="a" style="left:1720.5px;top:1082.0px;font-size:25.3px;line-height:25.3px;color:#444;">临时会员转正式会员指南</div>
<div class="a" style="left:1694px;top:1130px;width:10px;height:10px;border-radius:5px;background:#1a1a1a"></div>
<div class="a" style="left:1720.5px;top:1123.2px;font-size:25.3px;line-height:25.3px;color:#444;">讲师招募 | 与看雪一起，点亮职业生</div>
<div class="a" style="left:1720.5px;top:1164.2px;font-size:25.3px;line-height:25.3px;color:#444;">涯！</div>
<div class="a" style="left:1694px;top:1212.4px;width:10px;height:10px;border-radius:5px;background:#1a1a1a"></div>
<div class="a" style="left:1720.5px;top:1205.6px;font-size:25.3px;line-height:25.3px;color:#444;">版主招募，共建安全社区！</div>
<div class="a" style="left:1666px;top:1304px;width:512px;height:294px;overflow:hidden;background:#f6f6f7;"><div style="position:absolute;left:-150px;top:120px;width:360px;height:320px;border-radius:50%;background:radial-gradient(closest-side,rgba(252,220,198,0.9),rgba(252,226,208,0.45) 55%,rgba(246,246,247,0));"></div><div style="position:absolute;left:-90px;top:40px;width:220px;height:200px;border-radius:50%;background:radial-gradient(closest-side,rgba(238,228,205,0.8),rgba(242,236,222,0.3) 60%,rgba(246,246,247,0));"></div><div style="position:absolute;left:-40px;top:150px;width:420px;height:26px;transform:rotate(-28deg);background:linear-gradient(90deg,rgba(255,255,255,0.55),rgba(255,255,255,0));filter:blur(6px);"></div></div>
<svg style="left:1960px;top:1425px;overflow:hidden" width="218" height="173" viewBox="0 0 218 173"><defs><linearGradient id="fadeb" x1="0" y1="0" x2="0" y2="1"><stop offset="0" stop-color="#f6f6f7" stop-opacity="0"/><stop offset="1" stop-color="#f6f6f7" stop-opacity="0.9"/></linearGradient></defs><polygon points="60,33 88,22 118,30 88,42" fill="#f7f7f7"/><polygon points="60,33 88,42 88,84 60,80" fill="#efeff0"/><polygon points="88,42 118,30 118,70 88,84" fill="#e3e3e4"/><polygon points="168,62 191,52 191,88 168,96" fill="#e4e4e5"/><polygon points="55,108 124,80 190,106 124,136" fill="#f4f4f5"/><polygon points="55,108 124,136 124,173 55,173" fill="#ececed"/><polygon points="124,136 192,106 192,173 124,173" fill="#e4e4e5"/><polygon points="62,112 124,137 124,146 62,121" fill="#dedee0"/><polygon points="132,140 190,116 190,123 132,147" fill="#d8d8d9"/><circle cx="86" cy="152" r="5" fill="#e0e0e1"/><circle cx="104" cy="160" r="4.5" fill="#e0e0e1"/><rect x="135" y="148" width="4" height="25" fill="#d2d2d3"/><rect x="143" y="145" width="4" height="28" fill="#d2d2d3"/><rect x="151" y="142" width="4" height="31" fill="#d2d2d3"/><polygon points="78,85 124,57 171,85 124,110" fill="#fdfdfd"/><polygon points="78,85 124,110 124,120 78,95" fill="#ededee"/><polygon points="124,110 171,85 171,95 124,120" fill="#e2e2e3"/><path d="M101 84 C101 76 111 71 124 71 C137 71 147 77 147 85 C147 92 137 97 124 97 C111 97 101 92 101 84 Z" fill="#ef8a5a"/><path d="M101 82 C101 74 111 69 124 69 C137 69 147 75 147 83 C147 90 137 95 124 95 C111 95 101 90 101 82 Z" fill="#f8c8b2"/><path d="M106 78 C106 70 114 66 126 66 C134 66 140 68 143 72 L128 80 L110 86 C107 84 106 81 106 78 Z" fill="#5cb7ea"/><path d="M110.5 64 C112 60 120 58 126 58 C134 58 139 61 139.5 65 L139.5 68 C136 70 130 71 124 71 C117 71 111 69 110.5 67 Z" fill="#6cc070"/><path d="M126 80 L148 80 L148 86 L132 86 Z" fill="#ee7d48"/><rect x="75.5" y="22" width="6" height="14" rx="2" fill="#d93c3e"/><rect x="83.5" y="15" width="6" height="19" rx="2" fill="#f2b040"/><rect x="92" y="8" width="6" height="21" rx="2" fill="#ee7f4f"/><path d="M86 14 C88 8 91 6 94 7" stroke="#999" stroke-width="0.6" fill="none"/><polygon points="7,140 40,126 70,138 70,173 7,173" fill="#ededee"/><polygon points="34,150 70,136 70,173 34,173" fill="#e3e3e4"/><polygon points="32,114 44,103 52,110 40,120" fill="#ef6f36"/><path d="M38 111 L45 108" stroke="#fff" stroke-width="1"/><polygon points="38,126 43,123 48,126 48,132 43,135 38,132" fill="#8f8f8f"/><line x1="20.7" y1="121" x2="36.8" y2="130" stroke="#ef7a45" stroke-width="0.8"/><circle cx="35.7" cy="133" r="1.8" fill="#ef7a45"/><polygon points="156,50 170,44 178.5,51 164,57" fill="#f4a47c"/><polygon points="156,50 164,57 164,60 156,53" fill="#d9d9da"/><path d="M162 32 C168 34 172 38 174 44" stroke="#f3a57a" stroke-width="1" fill="none"/><path d="M164 36 C167 38 170 41 171 45" stroke="#f3a57a" stroke-width="0.8" fill="none"/><polygon points="184,100 195,106 197.5,130 186,124" fill="#fbe6d2" stroke="#c9807a" stroke-width="0.9"/><polygon points="199,111 210,117 210,125.5 199,119.5" fill="#fbe3d3" stroke="#d98a7a" stroke-width="0.8"/><rect x="0" y="128" width="218" height="45" fill="url(#fadeb)"/></svg>
<div class="a" style="left:1709.0px;top:1365.2px;font-size:40.5px;line-height:40.5px;color:#2e2e2e;font-weight:bold;letter-spacing:0.9px;">应用上架合规检测服务</div>
<div class="a" style="left:1709.5px;top:1440.5px;font-size:17px;line-height:17px;color:#555;letter-spacing:1.1px;">为移动应用提供专业的移动应用合</div>
<div class="a" style="left:1709.5px;top:1477.0px;font-size:17px;line-height:17px;color:#555;letter-spacing:1.1px;">规检测服务，有效检测各项上架合</div>
<div class="a" style="left:1709.5px;top:1513.5px;font-size:17px;line-height:17px;color:#555;letter-spacing:1.1px;">规点，帮助应用顺利上架</div>
<div class="card" style="left:1666px;top:1626px;width:512px;height:200px;"></div>
<div class="a" style="left:1694.3px;top:1663.0px;font-size:33px;line-height:33px;color:#1a1a1a;">RANK增量排行</div>
<div class="card" style="left:13px;top:804px;width:1625px;height:567px;"></div>
<div class="a" style="left:13px;top:890px;width:1625px;height:1.5px;background:#f0f1f2;"></div>
<div class="a" style="left:39.9px;top:835.0px;font-size:35px;line-height:35px;color:#1a1a1a;">移动安全</div>
<div class="card" style="left:13px;top:1400.5px;width:1625px;height:400px;"></div>
<div class="a" style="left:13px;top:1484.5px;width:1625px;height:1.5px;background:#f0f1f2;"></div>
<div class="a" style="left:39.8px;top:1428.5px;font-size:35px;line-height:35px;color:#1a1a1a;transform-origin:0 0;transform:scaleX(0.965);">PC安全</div>
<div class="a" style="left:100.6px;top:953.3px;width:127px;height:127px;border-radius:50%;background:#ebf7fe;"></div>
<div class="a" style="left:254.7px;top:965.2px;font-size:30.5px;line-height:30.5px;color:#161616;font-weight:bold;transform-origin:0 0;transform:scaleX(1.066);">Android安全</div>
<div class="a" style="left:456.2px;top:956.4px;width:193px;height:45px;border-radius:23px;background:#f6f6f6;"></div>
<svg style="left:474.2px;top:964.6px" width="24" height="27" viewBox="0 0 24 27"><path d="M0 2 Q0 0 2 0 H21.5 Q23.5 0 23.5 2 V27 L11.75 23 L0 27 Z" fill="#f7892e"/><path d="M5 6.2 H18.5 M5 11.4 H18.5" stroke="#fff" stroke-width="2.2"/></svg>
<div class="a" style="left:511.2px;top:968.9px;font-size:24px;line-height:24px;color:#555;">主题：8194</div>
<div class="a" style="left:254.8px;top:1021.9px;font-size:24px;line-height:24px;color:#8a8a8a;transform-origin:0 0;transform:scaleX(0.995);">Android系统逆向、对抗、加固、漏洞等</div>
<div class="a" style="left:254.8px;top:1072.9px;font-size:24px;line-height:24px;color:#8a8a8a;">版主：</div>
<div class="a" style="left:333.8px;top:1072.9px;font-size:24px;line-height:24px;color:#8a8a8a;">LowRebSwrd</div>
<div class="a" style="left:500.2px;top:1072.9px;font-size:24px;line-height:24px;color:#8a8a8a;">Claud</div>
<div class="a" style="left:826px;top:953.8px;width:127px;height:127px;border-radius:50%;background:#ebf7fe;"></div>
<div class="a" style="left:980.9px;top:965.2px;font-size:30.5px;line-height:30.5px;color:#161616;font-weight:bold;transform-origin:0 0;transform:scaleX(1.025);">智能设备</div>
<div class="a" style="left:1116px;top:956.4px;width:192.5px;height:45px;border-radius:23px;background:#f6f6f6;"></div>
<svg style="left:1134px;top:964.6px" width="24" height="27" viewBox="0 0 24 27"><path d="M0 2 Q0 0 2 0 H21.5 Q23.5 0 23.5 2 V27 L11.75 23 L0 27 Z" fill="#f7892e"/><path d="M5 6.2 H18.5 M5 11.4 H18.5" stroke="#fff" stroke-width="2.2"/></svg>
<div class="a" style="left:1171.0px;top:968.9px;font-size:24px;line-height:24px;color:#555;">主题：1513</div>
<div class="a" style="left:981.0px;top:1021.9px;font-size:24px;line-height:24px;color:#8a8a8a;transform-origin:0 0;transform:scaleX(0.977);">讨论IoT智能设备安全威胁及防护技术</div>
<div class="a" style="left:981.0px;top:1072.9px;font-size:24px;line-height:24px;color:#8a8a8a;">版主：</div>
<div class="a" style="left:1060.0px;top:1072.9px;font-size:24px;line-height:24px;color:#8a8a8a;">gjden</div>
<div class="a" style="left:1146.4px;top:1072.9px;font-size:24px;line-height:24px;color:#8a8a8a;">胡一米</div>
<div class="a" style="left:100.6px;top:1167px;width:127px;height:127px;border-radius:50%;background:#ebf7fe;"></div>
<div class="a" style="left:254.7px;top:1178.8px;font-size:30.5px;line-height:30.5px;color:#161616;font-weight:bold;transform-origin:0 0;transform:scaleX(1.021);">iOS安全</div>
<div class="a" style="left:381px;top:1170.0px;width:193.5px;height:45px;border-radius:23px;background:#f6f6f6;"></div>
<svg style="left:399px;top:1178.2px" width="24" height="27" viewBox="0 0 24 27"><path d="M0 2 Q0 0 2 0 H21.5 Q23.5 0 23.5 2 V27 L11.75 23 L0 27 Z" fill="#f7892e"/><path d="M5 6.2 H18.5 M5 11.4 H18.5" stroke="#fff" stroke-width="2.2"/></svg>
<div class="a" style="left:436.0px;top:1182.5px;font-size:24px;line-height:24px;color:#555;">主题：1476</div>
<div class="a" style="left:254.8px;top:1235.5px;font-size:24px;line-height:24px;color:#8a8a8a;transform-origin:0 0;transform:scaleX(0.975);">iOS越狱、逆向技术交流</div>
<div class="a" style="left:826px;top:1168px;width:127px;height:127px;border-radius:50%;background:#ebf7fe;"></div>
<div class="a" style="left:980.9px;top:1178.6px;font-size:30.5px;line-height:30.5px;color:#161616;font-weight:bold;transform-origin:0 0;transform:scaleX(1.084);">HarmonyOS</div>
<div class="a" style="left:1182.7px;top:1169.8px;width:179px;height:45px;border-radius:23px;background:#f6f6f6;"></div>
<svg style="left:1200.7px;top:1178px" width="24" height="27" viewBox="0 0 24 27"><path d="M0 2 Q0 0 2 0 H21.5 Q23.5 0 23.5 2 V27 L11.75 23 L0 27 Z" fill="#f7892e"/><path d="M5 6.2 H18.5 M5 11.4 H18.5" stroke="#fff" stroke-width="2.2"/></svg>
<div class="a" style="left:1237.7px;top:1182.3px;font-size:24px;line-height:24px;color:#555;">主题：112</div>
<div class="a" style="left:981.0px;top:1235.3px;font-size:24px;line-height:24px;color:#8a8a8a;transform-origin:0 0;transform:scaleX(0.98);">鸿蒙是一款跨平台操作系统。</div>
<div class="a" style="left:100.6px;top:1549px;width:127px;height:127px;border-radius:50%;background:#ebf7fe;"></div>
<div class="a" style="left:254.7px;top:1560.1px;font-size:30.5px;line-height:30.5px;color:#161616;font-weight:bold;transform-origin:0 0;transform:scaleX(1.04);">软件逆向</div>
<div class="a" style="left:390.5px;top:1551.3px;width:206.5px;height:45px;border-radius:23px;background:#f6f6f6;"></div>
<svg style="left:408.5px;top:1559.5px" width="24" height="27" viewBox="0 0 24 27"><path d="M0 2 Q0 0 2 0 H21.5 Q23.5 0 23.5 2 V27 L11.75 23 L0 27 Z" fill="#f7892e"/><path d="M5 6.2 H18.5 M5 11.4 H18.5" stroke="#fff" stroke-width="2.2"/></svg>
<div class="a" style="left:445.5px;top:1563.8px;font-size:24px;line-height:24px;color:#555;">主题：35553</div>
<div class="a" style="left:254.8px;top:1616.8px;font-size:24px;line-height:24px;color:#8a8a8a;transform-origin:0 0;transform:scaleX(1.02);">顶级Windows,UNIX软件逆向论坛!</div>
<div class="a" style="left:254.8px;top:1667.8px;font-size:24px;line-height:24px;color:#8a8a8a;">版主：</div>
<div class="a" style="left:333.8px;top:1667.8px;font-size:24px;line-height:24px;color:#8a8a8a;">kanxue</div>
<div class="a" style="left:435.2px;top:1667.8px;font-size:24px;line-height:24px;color:#8a8a8a;">jux1a</div>
<div class="a" style="left:826px;top:1549px;width:127px;height:127px;border-radius:50%;background:#ebf7fe;"></div>
<div class="a" style="left:980.9px;top:1560.6px;font-size:30.5px;line-height:30.5px;color:#161616;font-weight:bold;transform-origin:0 0;transform:scaleX(1.03);">编程技术</div>
<div class="a" style="left:1116px;top:1551.8px;width:206px;height:45px;border-radius:23px;background:#f6f6f6;"></div>
<svg style="left:1134px;top:1560px" width="24" height="27" viewBox="0 0 24 27"><path d="M0 2 Q0 0 2 0 H21.5 Q23.5 0 23.5 2 V27 L11.75 23 L0 27 Z" fill="#f7892e"/><path d="M5 6.2 H18.5 M5 11.4 H18.5" stroke="#fff" stroke-width="2.2"/></svg>
<div class="a" style="left:1171.0px;top:1564.3px;font-size:24px;line-height:24px;color:#555;">主题：19306</div>
<div class="a" style="left:981.0px;top:1617.3px;font-size:24px;line-height:24px;color:#8a8a8a;transform-origin:0 0;transform:scaleX(0.984);">内核安全及其开发技术</div>
<div class="a" style="left:981.0px;top:1668.3px;font-size:24px;line-height:24px;color:#8a8a8a;">版主：</div>
<div class="a" style="left:1060.0px;top:1668.3px;font-size:24px;line-height:24px;color:#8a8a8a;">KevinsBobo</div>
<div class="a" style="left:1214.0px;top:1668.3px;font-size:24px;line-height:24px;color:#8a8a8a;">玩命</div>
<svg style="left:126px;top:974px" width="75" height="88" viewBox="0 0 75 88"><g fill="#0b9bf0"><path d="M16 27 A21.5 21.5 0 0 1 59 27 Z"/><rect x="16" y="30" width="43" height="42" rx="2"/><rect x="1" y="30" width="11" height="36" rx="5.5"/><rect x="63" y="30" width="11" height="36" rx="5.5"/><rect x="23" y="62" width="11" height="26" rx="5.5"/><rect x="41" y="62" width="11" height="26" rx="5.5"/></g><g stroke="#0b9bf0" stroke-width="3.2" stroke-linecap="round"><line x1="24" y1="10" x2="19" y2="3"/><line x1="51" y1="10" x2="56" y2="3"/></g><circle cx="28" cy="17.5" r="2.2" fill="#fff"/><circle cx="47" cy="17.5" r="2.2" fill="#fff"/></svg>
<svg style="left:855px;top:982px" width="70" height="70" viewBox="0 0 70 70"><g fill="#0b9bf0"><rect x="0" y="0.5" width="69" height="19"/><rect x="0" y="25.5" width="69" height="18.5"/><rect x="0" y="50" width="69" height="19"/></g><g stroke="#fff" stroke-width="2"><line x1="10" y1="10" x2="41" y2="10"/><line x1="10" y1="35" x2="41" y2="35"/><line x1="10" y1="59.5" x2="41" y2="59.5"/></g><circle cx="54" cy="10" r="4.5" fill="#f58a37"/><circle cx="54" cy="35" r="4.5" fill="#fff"/><circle cx="54" cy="59.5" r="4.5" fill="#f58a37"/></svg>
<svg style="left:131px;top:1192px" width="66" height="78" viewBox="0 0 66 78"><path d="M33 26 C38 21 46 19 52 22 C56 24 59 27 60 29 C54 32 51 38 52 45 C53 52 58 56 64 58 C61 66 56 73 51 76 C47 78 42 77 38 75 C34 73 30 73 26 75 C21 77 17 78 13 75 C6 68 0 56 0 45 C0 33 7 24 17 22 C23 21 28 24 33 26 Z" fill="#0b9bf0"/><path d="M33 18 C32 11 37 3 48 1 C49 9 43 17 33 18 Z" fill="#f58a37"/></svg>
<svg style="left:846px;top:1193px" width="88" height="76" viewBox="0 0 88 76"><g fill="#0b9bf0"><path d="M42.6 39.5 L42 8 C41.5 3 38 1.5 35 2.5 C30 4.5 29 10 30.5 16 C32.5 25 38 33 42.6 39.5 Z"/><path d="M40.4 40.9 L21.5 11 C18.5 11.5 16 14 16.1 19 C16.3 24 19 28 24 32 C29 36 35 39 40.4 40.9 Z"/><path d="M36.8 42.6 L13 27.2 C11.5 28.5 11 31 11.5 33.5 C12.5 37.5 16 40.5 21 41.8 C26 42.8 31 42.8 36.8 42.6 Z"/><path d="M17.9 43.9 L36.8 43.9 C32 47 27 50 24 50.5 C21 50.5 19 47.5 17.9 43.9 Z"/></g><g fill="#0b9bf0" transform="translate(87.8 0) scale(-1 1)"><path d="M42.6 39.5 L42 8 C41.5 3 38 1.5 35 2.5 C30 4.5 29 10 30.5 16 C32.5 25 38 33 42.6 39.5 Z"/><path d="M40.4 40.9 L21.5 11 C18.5 11.5 16 14 16.1 19 C16.3 24 19 28 24 32 C29 36 35 39 40.4 40.9 Z"/><path d="M36.8 42.6 L13 27.2 C11.5 28.5 11 31 11.5 33.5 C12.5 37.5 16 40.5 21 41.8 C26 42.8 31 42.8 36.8 42.6 Z"/><path d="M17.9 43.9 L36.8 43.9 C32 47 27 50 24 50.5 C21 50.5 19 47.5 17.9 43.9 Z"/></g><text x="44.5" y="71" text-anchor="middle" font-family="Liberation Sans" font-weight="bold" font-size="17" fill="#f08a3a" stroke="#f08a3a" stroke-width="0.5" textLength="84" lengthAdjust="spacingAndGlyphs">HarmonyOS</text><rect x="68.6" y="73.6" width="8.3" height="1.8" fill="#0b9bf0"/></svg>
<svg style="left:115px;top:1585px" width="98" height="56" viewBox="0 0 98 56"><path d="M57 19 C61 12 68 9.4 76 9.4 C85 9.4 90.6 17 90.6 28 C90.6 39 85 46.6 76 46.6 C66 46.6 58 38 50 28 C42 18 32 9.2 22 9.2 C12 9.2 5.1 17 5.1 28 C5.1 39 12 47.2 22 47.2 L24.3 47.1" stroke="#0b9bf0" stroke-width="10.5" fill="none"/><path d="M24.3 47.2 C32 47 39 42 45.5 35.5" stroke="#f5b07a" stroke-width="6.5" fill="none"/><path d="M53 14 L60 9 L67 12 L68 18 L64 22 L67 27 L61 26 L57 21 L52 23 Z" fill="#0b9bf0"/></svg>
<svg style="left:857.7px;top:1578.8px" width="64" height="69" viewBox="0 0 64 69"><rect x="0" y="0" width="63.4" height="68.3" rx="2" fill="#0b9bf0"/><rect x="1.8" y="2.2" width="59.8" height="15.1" fill="#fff"/><circle cx="9.25" cy="11" r="3" fill="#f58a37"/><circle cx="20.1" cy="11" r="3" fill="#f58a37"/><circle cx="31" cy="11" r="3" fill="#f58a37"/><g stroke="#fff" stroke-width="2.3" fill="none"><polyline points="18.5,32.2 7,43.7 18.5,55.2"/><polyline points="45,32.2 56.5,43.7 45,55.2"/><line x1="38.8" y1="29.5" x2="23.3" y2="57.7"/></g></svg>
</body></html>
